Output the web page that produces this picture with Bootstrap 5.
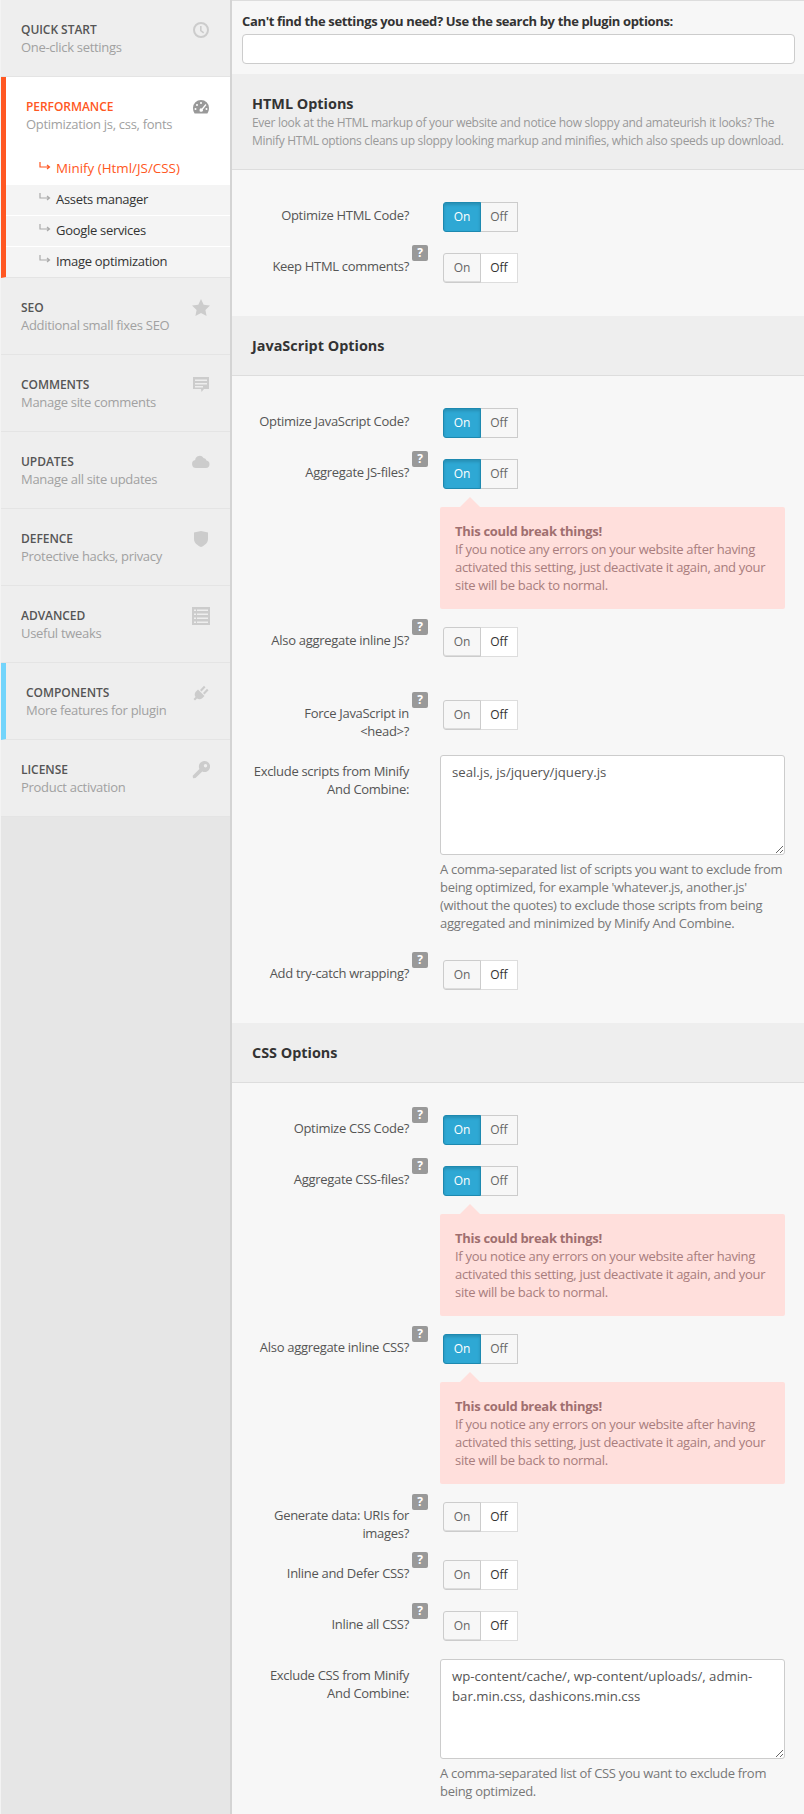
<!doctype html>
<html lang="en">
<head>
<meta charset="utf-8">
<title>Performance settings</title>
<link rel="stylesheet" href="https://cdn.jsdelivr.net/npm/bootstrap@5.3.0/dist/css/bootstrap.min.css">
<style>
html, body { height: 100%; }
body { background: #f7f7f7; font-family: "Open Sans", sans-serif; font-size: 13px; line-height: 18px; color: #555; overflow: hidden; letter-spacing: -.3px; }
.shell { display: flex; height: 1814px; overflow: hidden; }
.side { width: 232px; flex: none; background: #e6e6e6; border-left: 1px solid #f3f3f3; border-right: 2px solid #d4d4d4; }
.side-item { height: 77px; background: #eee; border-bottom: 1px solid #e4e4e4; padding: 21px 20px 0 20px; display: flex; justify-content: space-between; }
.side-item.is-active { background: #fff; border-left: 5px solid #ff5722; border-bottom: 0; padding-left: 20px; height: 78px; padding-top: 21px; }
.side-item.is-comp { border-left: 5px solid #72d4fb; padding-left: 20px; }
.side-title { font-size: 12px; font-weight: 600; color: #555; text-transform: uppercase; line-height: 17px; letter-spacing: -.05px; }
.side-sub { color: #a1a1a1; line-height: 18px; }
.is-active .side-title { color: #ff5722; }
.side-icon { width: 18px; height: 18px; flex: none; fill: #ccc; }
.is-active .side-icon { fill: #999; }
.sub-wrap { border-left: 5px solid #ff5722; border-bottom: 1px solid #e4e4e4; }
.sub-item { height: 31px; background: #f4f4f4; border-bottom: 1px solid #fff; padding: 5px 0 0 34px; color: #333; display: flex; align-items: flex-start; gap: 5px; }
.sub-item:last-child { border-bottom: 0; height: 30px; }
.sub-item.is-on { background: #fff; color: #ff5722; border: 0; height: 30px; padding-top: 4px; font-size: 13.4px; letter-spacing: 0; }
.sub-arrow { width: 12px; height: 9px; margin-top: 3px; margin-left: -1px; flex: none; fill: none; stroke: #aaa; stroke-width: 1.2; }
.is-on .sub-arrow { stroke: #ff5722; }
.main { flex: 1; min-width: 0; border-top: 1px solid #ddd; }
.search-box { height: 73px; padding: 11px 9px 0 10px; }
.search-label { display: block; font-weight: 700; color: #333; margin: 0 0 4px; font-size: 13px; letter-spacing: -.35px; }
.search-input { height: 30px; padding: 0 10px; border-color: #ccc; border-radius: 4px; }
.sect-head { background: #eee; border-bottom: 1px solid #ddd; padding: 20px 10px 19px 20px; }
.sect-head h4 { font-size: 14.4px; font-weight: 700; color: #333; line-height: 20px; margin: 0; letter-spacing: 0; }
.sect-head p { margin: 0; color: #999; font-size: 12px; line-height: 18px; letter-spacing: -.3px; }
.sect-body { padding: 32px 0 12px; }
.opt { display: flex; margin-bottom: 18px; }
.opt.gap-after { margin-bottom: 40px; }
.opt.has-area { margin-top: -3px; }
.opt-name { width: 177px; flex: none; text-align: right; padding: 4px 0 0 20px; color: #555; position: relative; }
.has-area .opt-name { padding-top: 7px; }
.opt-ctl { margin-left: 31px; width: 345px; }
.help-tag { position: absolute; right: -19px; top: -8px; width: 16px; height: 16px; background: #999; color: #fff; border-radius: 2px; font-size: 12px; font-weight: 700; line-height: 16px; text-align: center; letter-spacing: 0; }
.tog { display: flex; width: fit-content; height: 30px; margin: 0 0 3px 3px; }
.tog-btn { width: 38px; height: 30px; padding: 0; border: 1px solid #ddd; font-size: 12px; line-height: 28px; text-align: center; background: #fff; color: #333; }
.tog-on { border-radius: 3px 0 0 3px; }
.tog-off { margin-left: -1px; }
.tog.state-off .tog-on { background: #f7f7f7; color: #666; border-color: #ccc; box-shadow: inset 0 -1px 0 #ddd; position: relative; z-index: 1; }
.tog.state-on .tog-on { background: #2ea8d4; color: #fff; border-color: #1d89b0; box-shadow: inset 0 2px 3px rgba(0,0,0,.15); position: relative; z-index: 1; }
.tog.state-on .tog-off { background: #f7f7f7; color: #666; border-color: #ccc; }
.warn { margin: 18px 0 0; background: #ffdfdc; color: #a87d7d; padding: 15px 14px 15px 15px; border-radius: 2px; position: relative; }
.warn b { display: block; font-weight: 700; color: #a06f6f; }
.warn::before { content: ""; position: absolute; left: 20px; top: -10px; border: 10px solid transparent; border-top: 0; border-bottom: 10px solid #ffdfdc; }
.txt { width: 345px; height: 100px; padding: 6px 10px 6px 11px; font-size: 13.2px; line-height: 20px; color: #555; border: 1px solid #ccc; border-radius: 3px; background: #fff; display: block; font-family: "Open Sans", sans-serif; letter-spacing: 0; }
.txt-note { margin: 5px 0 10px; color: #777; }
</style>
</head>
<body>
<div class="shell">
  <aside class="side">
    <div class="side-item"><div><div class="side-title">Quick start</div><div class="side-sub">One-click settings</div></div>
      <svg class="side-icon" viewBox="0 0 18 18"><path fill-rule="evenodd" d="M9 1a8 8 0 1 1 0 16A8 8 0 0 1 9 1zm0 2a6 6 0 1 0 0 12A6 6 0 0 0 9 3zm-1 2h1.600v4.200l2.600 2-1 1.200L8 10z"/></svg></div>
    <div class="side-item is-active"><div><div class="side-title">Performance</div><div class="side-sub">Optimization js, css, fonts</div></div>
      <svg class="side-icon" viewBox="0 0 18 18"><path fill-rule="evenodd" d="M9 2a8 8 0 0 1 8 8c0 2-.6 3.900-1.600 5.400H2.600A9 9 0 0 1 1 10a8 8 0 0 1 8-8zM9 4a1 1 0 1 0 0 2 1 1 0 0 0 0-2zM5 6a1 1 0 1 0 0 2 1 1 0 0 0 0-2zm8.500 0L9.800 10.500a1.700 1.700 0 1 0 1 1L14.500 7zM3.500 10a1 1 0 1 0 0 2 1 1 0 0 0 0-2zm11 0a1 1 0 1 0 0 2 1 1 0 0 0 0-2z"/></svg></div>
    <div class="sub-wrap">
      <div class="sub-item is-on"><svg class="sub-arrow" viewBox="0 0 12 9"><path d="M1 0v5h9M8 3l2.500 2L8 7"/></svg>Minify (Html/JS/CSS)</div>
      <div class="sub-item"><svg class="sub-arrow" viewBox="0 0 12 9"><path d="M1 0v5h9M8 3l2.500 2L8 7"/></svg>Assets manager</div>
      <div class="sub-item"><svg class="sub-arrow" viewBox="0 0 12 9"><path d="M1 0v5h9M8 3l2.500 2L8 7"/></svg>Google services</div>
      <div class="sub-item"><svg class="sub-arrow" viewBox="0 0 12 9"><path d="M1 0v5h9M8 3l2.500 2L8 7"/></svg>Image optimization</div>
    </div>
    <div class="side-item"><div><div class="side-title">SEO</div><div class="side-sub">Additional small fixes SEO</div></div>
      <svg class="side-icon" viewBox="0 0 18 18"><path d="M9 0l2.700 5.800 6.300.8-4.600 4.300 1.200 6.200L9 14.100l-5.600 3 1.200-6.200L0 6.600l6.300-.8z"/></svg></div>
    <div class="side-item"><div><div class="side-title">Comments</div><div class="side-sub">Manage site comments</div></div>
      <svg class="side-icon" viewBox="0 0 18 18"><path fill-rule="evenodd" d="M1 1h16v12h-5l-2.500 3-.5-3H1zm2 2.500v1.500h12V3.500zM3 7v1.500h12V7zm0 3v1.500h8V10z"/></svg></div>
    <div class="side-item"><div><div class="side-title">Updates</div><div class="side-sub">Manage all site updates</div></div>
      <svg class="side-icon" viewBox="0 0 18 18"><path d="M4 15a4 4 0 0 1-.8-7.900A4.500 4.500 0 0 1 11.500 5a3.200 3.200 0 0 1 3 2.500A3.800 3.800 0 0 1 14 15z"/></svg></div>
    <div class="side-item"><div><div class="side-title">Defence</div><div class="side-sub">Protective hacks, privacy</div></div>
      <svg class="side-icon" viewBox="0 0 18 18"><path d="M2 2.500 9 1l7 1.500V9c0 4-3.500 6.500-7 8-3.500-1.500-7-4-7-8z"/></svg></div>
    <div class="side-item"><div><div class="side-title">Advanced</div><div class="side-sub">Useful tweaks</div></div>
      <svg class="side-icon" viewBox="0 0 18 18"><path fill-rule="evenodd" d="M0 0h18v18H0zm2 2.500v1.500h2V2.500zm3 0v1.500h11V2.500zM2 6.500V8h2V6.500zm3 0V8h11V6.500zm-3 4V12h2v-1.500zm3 0V12h11v-1.500zm-3 4V16h2v-1.500zm3 0V16h11v-1.500z"/></svg></div>
    <div class="side-item is-comp"><div><div class="side-title">Components</div><div class="side-sub">More features for plugin</div></div>
      <svg class="side-icon" viewBox="0 0 18 18"><path d="M6 5.500l6.500 6.500-2 2a4.500 4.500 0 0 1-5.500.5L3 16.500 1.500 15l2-2a4.500 4.500 0 0 1 .5-5.500zM8 6l4-4.200 1.500 1.500-4 4.200zM11 9l4-4.200 1.500 1.500-4 4.200z"/></svg></div>
    <div class="side-item"><div><div class="side-title">License</div><div class="side-sub">Product activation</div></div>
      <svg class="side-icon" viewBox="0 0 18 18"><path fill-rule="evenodd" d="M12.500 0a5.500 5.500 0 1 1-2.200 10.500L3.500 17 1 17.300l-.3-2.600L7.400 7.900A5.500 5.500 0 0 1 12.500 0zm1 3a1.700 1.700 0 1 0 0 3.400 1.700 1.700 0 0 0 0-3.400z"/></svg></div>
  </aside>
  <main class="main">
    <div class="search-box">
      <label class="search-label" for="q">Can't find the settings you need? Use the search by the plugin options:</label>
      <input id="q" class="form-control search-input" type="text">
    </div>

    <section>
      <div class="sect-head"><h4>HTML Options</h4><p>Ever look at the HTML markup of your website and notice how sloppy and amateurish it looks? The Minify HTML options cleans up sloppy looking markup and minifies, which also speeds up download.</p></div>
      <div class="sect-body">
        <div class="opt"><div class="opt-name">Optimize HTML Code?</div><div class="opt-ctl"><div class="tog state-on"><button class="tog-btn tog-on">On</button><button class="tog-btn tog-off">Off</button></div></div></div>
        <div class="opt"><div class="opt-name">Keep HTML comments?<span class="help-tag">?</span></div><div class="opt-ctl"><div class="tog state-off"><button class="tog-btn tog-on">On</button><button class="tog-btn tog-off">Off</button></div></div></div>
      </div>
    </section>

    <section>
      <div class="sect-head"><h4>JavaScript Options</h4></div>
      <div class="sect-body">
        <div class="opt"><div class="opt-name">Optimize JavaScript Code?</div><div class="opt-ctl"><div class="tog state-on"><button class="tog-btn tog-on">On</button><button class="tog-btn tog-off">Off</button></div></div></div>
        <div class="opt"><div class="opt-name">Aggregate JS-files?<span class="help-tag">?</span></div><div class="opt-ctl"><div class="tog state-on"><button class="tog-btn tog-on">On</button><button class="tog-btn tog-off">Off</button></div>
          <div class="warn"><b>This could break things!</b>If you notice any errors on your website after having activated this setting, just deactivate it again, and your site will be back to normal.</div></div></div>
        <div class="opt gap-after"><div class="opt-name">Also aggregate inline JS?<span class="help-tag">?</span></div><div class="opt-ctl"><div class="tog state-off"><button class="tog-btn tog-on">On</button><button class="tog-btn tog-off">Off</button></div></div></div>
        <div class="opt"><div class="opt-name">Force JavaScript in<br>&lt;head&gt;?<span class="help-tag">?</span></div><div class="opt-ctl"><div class="tog state-off"><button class="tog-btn tog-on">On</button><button class="tog-btn tog-off">Off</button></div></div></div>
        <div class="opt has-area"><div class="opt-name">Exclude scripts from Minify And Combine:</div><div class="opt-ctl"><textarea class="txt">seal.js, js/jquery/jquery.js</textarea><p class="txt-note">A comma-separated list of scripts you want to exclude from being optimized, for example 'whatever.js, another.js' (without the quotes) to exclude those scripts from being aggregated and minimized by Minify And Combine.</p></div></div>
        <div class="opt"><div class="opt-name">Add try-catch wrapping?<span class="help-tag">?</span></div><div class="opt-ctl"><div class="tog state-off"><button class="tog-btn tog-on">On</button><button class="tog-btn tog-off">Off</button></div></div></div>
      </div>
    </section>

    <section>
      <div class="sect-head"><h4>CSS Options</h4></div>
      <div class="sect-body">
        <div class="opt"><div class="opt-name">Optimize CSS Code?<span class="help-tag">?</span></div><div class="opt-ctl"><div class="tog state-on"><button class="tog-btn tog-on">On</button><button class="tog-btn tog-off">Off</button></div></div></div>
        <div class="opt"><div class="opt-name">Aggregate CSS-files?<span class="help-tag">?</span></div><div class="opt-ctl"><div class="tog state-on"><button class="tog-btn tog-on">On</button><button class="tog-btn tog-off">Off</button></div>
          <div class="warn"><b>This could break things!</b>If you notice any errors on your website after having activated this setting, just deactivate it again, and your site will be back to normal.</div></div></div>
        <div class="opt"><div class="opt-name">Also aggregate inline CSS?<span class="help-tag">?</span></div><div class="opt-ctl"><div class="tog state-on"><button class="tog-btn tog-on">On</button><button class="tog-btn tog-off">Off</button></div>
          <div class="warn"><b>This could break things!</b>If you notice any errors on your website after having activated this setting, just deactivate it again, and your site will be back to normal.</div></div></div>
        <div class="opt"><div class="opt-name">Generate data: URIs for images?<span class="help-tag">?</span></div><div class="opt-ctl"><div class="tog state-off"><button class="tog-btn tog-on">On</button><button class="tog-btn tog-off">Off</button></div></div></div>
        <div class="opt"><div class="opt-name">Inline and Defer CSS?<span class="help-tag">?</span></div><div class="opt-ctl"><div class="tog state-off"><button class="tog-btn tog-on">On</button><button class="tog-btn tog-off">Off</button></div></div></div>
        <div class="opt"><div class="opt-name">Inline all CSS?<span class="help-tag">?</span></div><div class="opt-ctl"><div class="tog state-off"><button class="tog-btn tog-on">On</button><button class="tog-btn tog-off">Off</button></div></div></div>
        <div class="opt has-area"><div class="opt-name">Exclude CSS from Minify And Combine:</div><div class="opt-ctl"><textarea class="txt">wp-content/cache/, wp-content/uploads/, admin-bar.min.css, dashicons.min.css</textarea><p class="txt-note">A comma-separated list of CSS you want to exclude from being optimized.</p></div></div>
      </div>
    </section>
  </main>
</div>
<script src="https://cdn.jsdelivr.net/npm/bootstrap@5.3.0/dist/js/bootstrap.bundle.min.js"></script>
</body>
</html>
